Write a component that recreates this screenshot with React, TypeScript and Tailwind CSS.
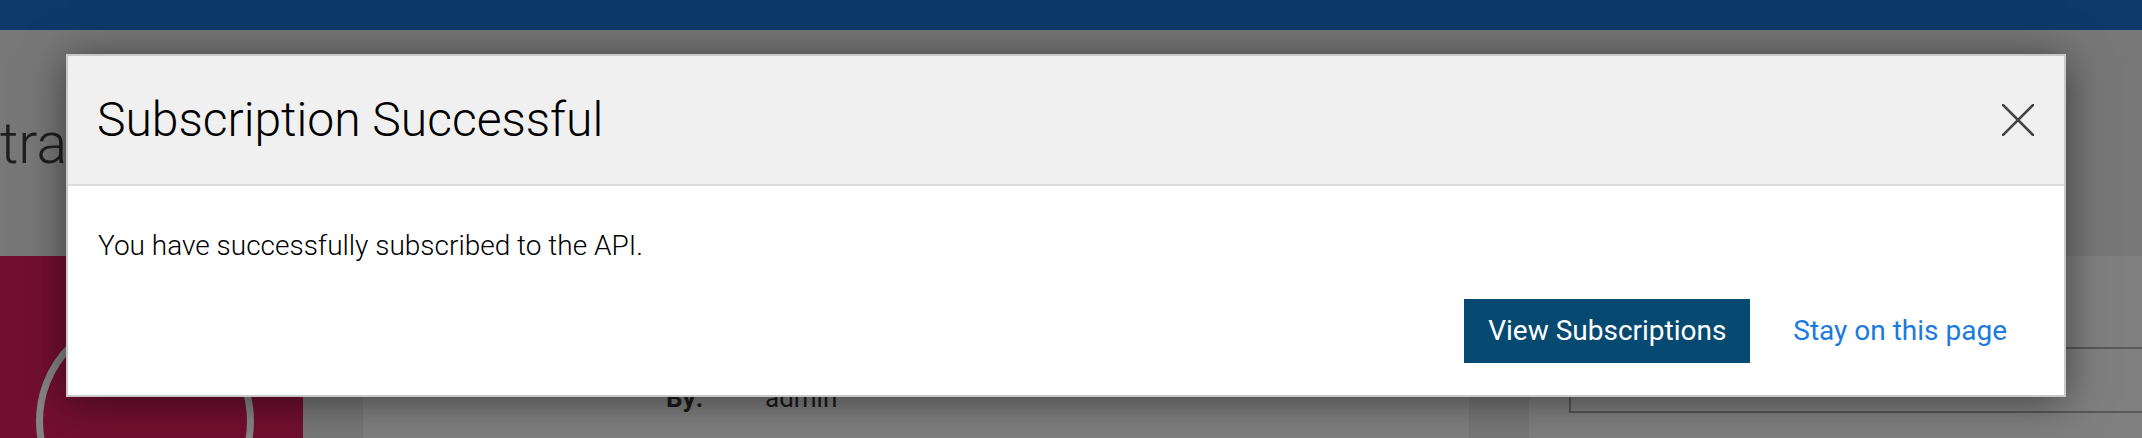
export default function App() {
  return (
    <div className="relative w-[2142px] h-[438px] overflow-hidden bg-[#787878] font-['Roboto',sans-serif]">
      <div className="h-[30px] bg-[#0e3a6b]" />
      <div className="h-[226px] pt-[85px]">
        <div className="text-[57px] font-light leading-none text-[#1e1e1e]">tra</div>
      </div>
      <div className="flex h-[182px]">
        <div className="w-[303px] shrink-0 bg-[#730f30] pl-[36px] pt-[56px]">
          <div className="h-[218px] w-[218px] rounded-full border-[7px] border-[#858585]" />
        </div>
        <div className="ml-[60px] w-[1106px] shrink-0 bg-[#808080] pl-[303px] pt-[129px]">
          <div className="flex text-[26px] leading-none text-[#1a1a1a]">
            <span className="w-[99px] font-bold">By:</span>
            <span>admin</span>
          </div>
        </div>
        <div className="ml-[60px] flex-1 bg-[#808080] pl-[40px] pt-[91px]">
          <div className="h-[66px] border-2 border-r-0 border-[#585858]" />
        </div>
      </div>

      <div className="absolute left-[66px] top-[54px] w-[2000px] border-2 border-[#c8c8c8] bg-white shadow-[0_4px_40px_rgba(0,0,0,0.5)]">
        <div className="flex h-[130px] items-center justify-between border-b-2 border-[#dcdcdc] bg-[#f0f0f0] pl-[29px] pr-[30px]">
          <h2 className="text-[48px] font-light leading-none text-black">Subscription Successful</h2>
          <button className="flex h-[32px] w-[32px] items-center justify-center" aria-label="Close">
            <svg width="32" height="32" viewBox="0 0 32 32" fill="none">
              <path d="M1 1 L31 31 M31 1 L1 31" stroke="#444" strokeWidth="2.6" strokeLinecap="square" />
            </svg>
          </button>
        </div>
        <div className="px-[30px] pb-[32px] pt-[43px]">
          <p className="text-[28px] font-light leading-[33px] text-black">
            You have successfully subscribed to the API.
          </p>
          <div className="mt-[37px] flex items-center justify-end">
            <button className="flex h-[64px] w-[286px] items-center justify-center bg-[#074a71] text-[28px] text-white">
              View Subscriptions
            </button>
            <a className="ml-[43px] mr-[27px] text-[28px] text-[#1a7ae0]">Stay on this page</a>
          </div>
        </div>
      </div>
    </div>
  );
}
